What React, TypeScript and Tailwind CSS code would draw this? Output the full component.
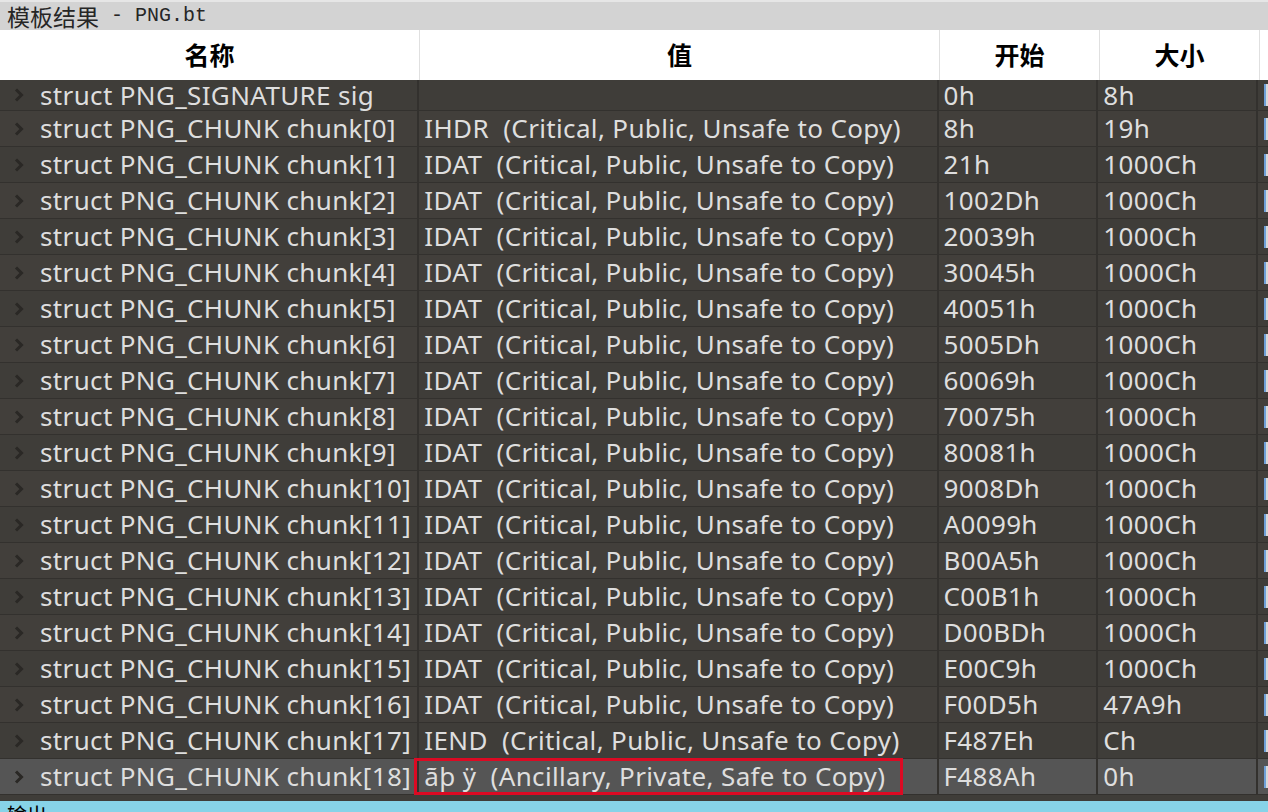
import React from "react";

type Row = { name: string; value: string; start: string; size: string };

const critical = "(Critical, Public, Unsafe to Copy)";

const rows: Row[] = [
  { name: "struct PNG_SIGNATURE sig", value: "", start: "0h", size: "8h" },
  { name: "struct PNG_CHUNK chunk[0]", value: `IHDR  ${critical}`, start: "8h", size: "19h" },
  { name: "struct PNG_CHUNK chunk[1]", value: `IDAT  ${critical}`, start: "21h", size: "1000Ch" },
  { name: "struct PNG_CHUNK chunk[2]", value: `IDAT  ${critical}`, start: "1002Dh", size: "1000Ch" },
  { name: "struct PNG_CHUNK chunk[3]", value: `IDAT  ${critical}`, start: "20039h", size: "1000Ch" },
  { name: "struct PNG_CHUNK chunk[4]", value: `IDAT  ${critical}`, start: "30045h", size: "1000Ch" },
  { name: "struct PNG_CHUNK chunk[5]", value: `IDAT  ${critical}`, start: "40051h", size: "1000Ch" },
  { name: "struct PNG_CHUNK chunk[6]", value: `IDAT  ${critical}`, start: "5005Dh", size: "1000Ch" },
  { name: "struct PNG_CHUNK chunk[7]", value: `IDAT  ${critical}`, start: "60069h", size: "1000Ch" },
  { name: "struct PNG_CHUNK chunk[8]", value: `IDAT  ${critical}`, start: "70075h", size: "1000Ch" },
  { name: "struct PNG_CHUNK chunk[9]", value: `IDAT  ${critical}`, start: "80081h", size: "1000Ch" },
  { name: "struct PNG_CHUNK chunk[10]", value: `IDAT  ${critical}`, start: "9008Dh", size: "1000Ch" },
  { name: "struct PNG_CHUNK chunk[11]", value: `IDAT  ${critical}`, start: "A0099h", size: "1000Ch" },
  { name: "struct PNG_CHUNK chunk[12]", value: `IDAT  ${critical}`, start: "B00A5h", size: "1000Ch" },
  { name: "struct PNG_CHUNK chunk[13]", value: `IDAT  ${critical}`, start: "C00B1h", size: "1000Ch" },
  { name: "struct PNG_CHUNK chunk[14]", value: `IDAT  ${critical}`, start: "D00BDh", size: "1000Ch" },
  { name: "struct PNG_CHUNK chunk[15]", value: `IDAT  ${critical}`, start: "E00C9h", size: "1000Ch" },
  { name: "struct PNG_CHUNK chunk[16]", value: `IDAT  ${critical}`, start: "F00D5h", size: "47A9h" },
  { name: "struct PNG_CHUNK chunk[17]", value: `IEND  ${critical}`, start: "F487Eh", size: "Ch" },
  { name: "struct PNG_CHUNK chunk[18]", value: "ãþ ÿ  (Ancillary, Private, Safe to Copy)", start: "F488Ah", size: "0h" },
];

function Chevron() {
  return (
    <svg width="10" height="14" viewBox="0 0 10 14" className="shrink-0">
      <path d="M2 1.5 L7.5 7 L2 12.5" fill="none" stroke="#2a2825" strokeWidth="3" />
    </svg>
  );
}

export default function App() {
  return (
    <div
      className="flex h-[812px] w-[1268px] flex-col overflow-hidden bg-[#3f3d39]"
      style={{ fontFamily: '"Noto Sans", "Noto Sans CJK SC", sans-serif' }}
    >
      {/* Title bar */}
      <div className="flex h-[30px] shrink-0 items-center border-t-2 border-[#e6e6e6] bg-[#d3d3d3] pl-[7px] text-[#262626]">
        <span className="text-[23px] leading-none" style={{ fontFamily: '"Noto Sans CJK SC", sans-serif' }}>
          模板结果
        </span>
        <span className="whitespace-pre text-[20px] leading-none" style={{ fontFamily: '"Liberation Mono", monospace' }}>
          {" - PNG.bt"}
        </span>
      </div>

      {/* Header */}
      <div className="flex h-[50px] shrink-0 bg-white text-[25px] font-bold text-black" style={{ fontFamily: '"Noto Sans CJK SC", sans-serif' }}>
        <div className="flex w-[420px] items-center justify-center border-r border-[#e0e0e0]">名称</div>
        <div className="flex w-[520px] items-center justify-center border-r border-[#e0e0e0]">值</div>
        <div className="flex w-[160px] items-center justify-center border-r border-[#e0e0e0]">开始</div>
        <div className="flex w-[160px] items-center justify-center border-r border-[#e0e0e0]">大小</div>
        <div className="flex-1" />
      </div>

      {/* Rows */}
      <div className="flex flex-col text-[26px] tracking-[0.35px] text-[#dedede]">
        {rows.map((r, i) => {
          const selected = i === rows.length - 1;
          const cell = selected ? "bg-[#555555]" : i % 2 === 0 ? "bg-[#3f3d39]" : "bg-[#423f3b]";
          return (
            <div
              key={i}
              className={`flex shrink-0 border-b border-[#33312e] ${i === 0 ? "h-[31px]" : "h-[36px]"}`}
            >
              <div className={`flex w-[420px] items-center gap-[16px] border-r-2 border-[#33312e] pl-[14px] ${cell}`}>
                <Chevron />
                <span className="whitespace-pre">{r.name}</span>
              </div>
              <div className={`relative flex w-[520px] items-center border-r-2 border-[#33312e] pl-[5px] ${cell}`}>
                <span className="whitespace-pre">{r.value}</span>
                {selected && (
                  <div className="absolute -top-[1px] left-[-5px] h-[37px] w-[489px] border-[3px] border-[#dc0a23]" />
                )}
              </div>
              <div className={`flex w-[160px] items-center border-r-2 border-[#33312e] pl-[5px] ${cell}`}>
                {r.start}
              </div>
              <div className={`flex w-[160px] items-center border-r-2 border-[#33312e] pl-[5px] ${cell}`}>
                {r.size}
              </div>
              <div className={`flex flex-1 items-center pl-[6px] ${cell}`}>
                <div className="h-[22px] w-[4px] border-l-2 border-[#6fa0d8] bg-[#d8d8d8]" />
              </div>
            </div>
          );
        })}
      </div>

      <div className="flex-1" />

      {/* Output panel strip */}
      <div className="h-[11px] shrink-0 overflow-hidden bg-[#87d3e8] pl-[7px] text-[20px] leading-[28px] text-black" style={{ fontFamily: '"Noto Sans CJK SC", sans-serif' }}>
        输出
      </div>
    </div>
  );
}
